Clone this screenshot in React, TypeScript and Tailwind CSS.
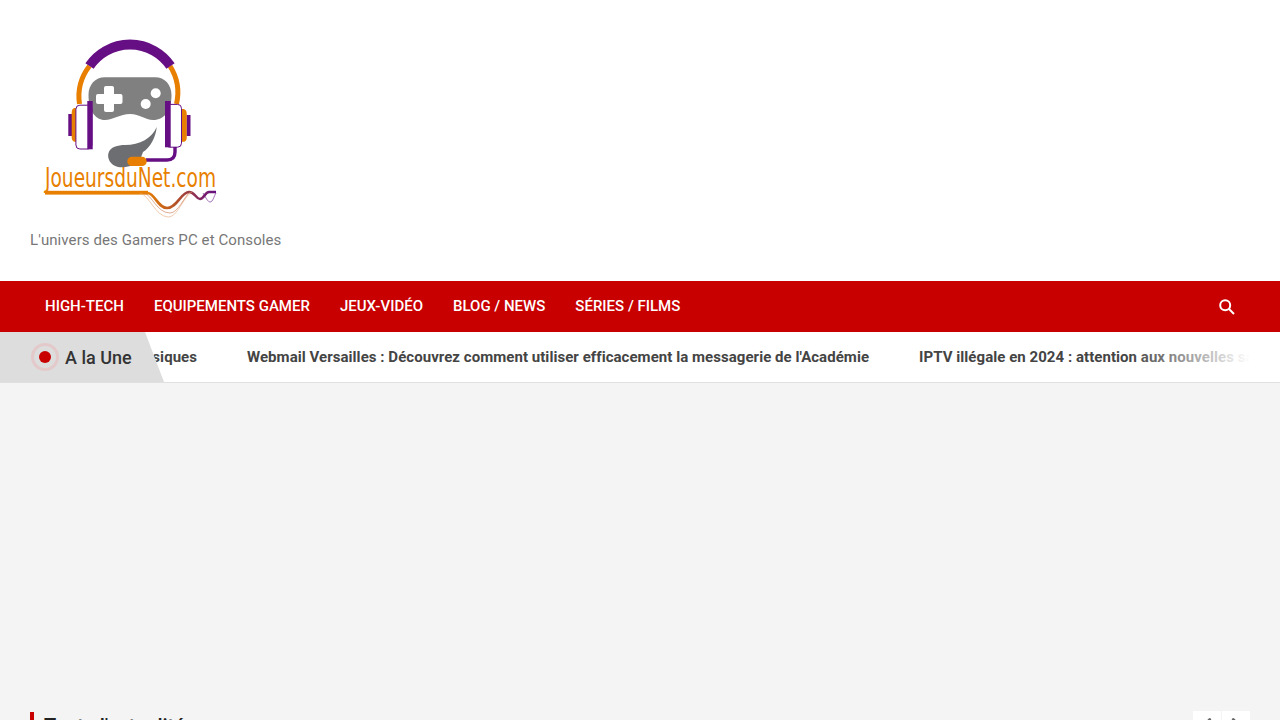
import React from "react";
import { ChevronLeft, ChevronRight } from "lucide-react";

const NAV = ["High-Tech", "Equipements Gamer", "Jeux-Vidéo", "Blog / News", "Séries / Films"];

const TICKER = [
  "Webmail Versailles : Découvrez comment utiliser efficacement la messagerie de l'Académie",
  "IPTV illégale en 2024 : attention aux nouvelles sanctions",
];

const ORANGE = "#e87f00";
const PURPLE = "#660e83";

// viewBox uses page coordinates so the numbers line up with the screenshot
function Logo() {
  return (
    <svg width="200" height="200" viewBox="30 30 200 200" className="block">
      <defs>
        <linearGradient id="wave" x1="146" y1="0" x2="215" y2="0" gradientUnits="userSpaceOnUse">
          <stop offset="0" stopColor={ORANGE} />
          <stop offset="0.45" stopColor="#b2502a" />
          <stop offset="1" stopColor={PURPLE} />
        </linearGradient>
      </defs>
      {/* headband */}
      <path d="M89.5 66A50 50 0 0 0 79.5 104" fill="none" stroke={ORANGE} strokeWidth="5" />
      <path d="M170 66A50 50 0 0 1 176.5 104" fill="none" stroke={ORANGE} strokeWidth="5" />
      <path d="M89.5 66A49 49 0 0 1 170.5 66" fill="none" stroke={PURPLE} strokeWidth="10" />
      {/* pad */}
      <path
        d="M105 77.3H155C165 77.3 171.5 85 171.5 95C171.5 110 165 120 153 120C145 120 140 114 130 114C120 114 113 120 105 120C95 120 88.5 110 88.5 95C88.5 85 95 77.3 105 77.3Z"
        fill="#808080"
      />
      <rect x="104" y="86" width="10" height="26" rx="2" fill="#fff" />
      <rect x="96" y="94" width="26.5" height="10" rx="2" fill="#fff" />
      <circle cx="155.7" cy="93.3" r="5" fill="#fff" />
      <circle cx="145.7" cy="104" r="5" fill="#fff" />
      {/* left ear */}
      <rect x="68.3" y="114" width="4" height="22" fill={PURPLE} />
      <path d="M76 108H74Q71.7 109 71.7 112V138Q71.7 141 74 141.7H76Z" fill={ORANGE} />
      <rect x="75.9" y="105.2" width="16" height="43.8" rx="4" fill="#fff" stroke={PURPLE} strokeWidth="1" />
      <rect x="87.3" y="101" width="5.4" height="48.3" fill={PURPLE} />
      {/* right ear */}
      <rect x="186.5" y="115" width="4" height="21" fill={PURPLE} />
      <path d="M181 109H184Q186.7 110 186.7 113V138Q186.7 141 184 141.7H181Z" fill={ORANGE} />
      <rect x="165.5" y="104.4" width="16" height="42.8" rx="4" fill="#fff" stroke={PURPLE} strokeWidth="1" />
      <rect x="165" y="101" width="5.7" height="46.3" fill={PURPLE} />
      {/* chin + mic */}
      <path
        d="M156.7 127C156 137 150 148 143 152L140 160C135 166 125 168 118 167C110 165 107 158 108.5 153C110 147 118 145 125 145C140 145 152 138 156.7 127Z"
        fill="#6d6e71"
      />
      <path d="M175 147V152Q175 160 167 160H146" fill="none" stroke={PURPLE} strokeWidth="3.4" />
      <rect x="127.3" y="156.7" width="19.4" height="9.4" rx="4.7" fill={ORANGE} />
      {/* wordmark */}
      <text
        x="45"
        y="187"
        fontFamily="'DejaVu Sans', sans-serif"
        fontSize="26"
        fill={ORANGE}
        textLength="171"
        lengthAdjust="spacingAndGlyphs"
      >
        JoueursduNet.com
      </text>
      {/* line + wave */}
      <path d="M148 193C155 194 158 208 167 208C177 208 181 192 189 192C195 192 196 199 200 199C204 199 205 192 209 192H216" fill="none" stroke="url(#wave)" strokeWidth="2.6" />
      <rect x="45" y="190.8" width="103" height="3.8" fill={ORANGE} />
      <path d="M140 193C150 196 155 216 168 217C178 217 183 197 192 192" fill="none" stroke="#e8a878" strokeWidth="0.6" />
      <path d="M144 193C152 195 157 213 170 213C178 213 184 197 190 192" fill="none" stroke="#c9764a" strokeWidth="0.6" />
      <path d="M203 193C206 198 208 202 210 202C213 202 214 196 216 193" fill="none" stroke={PURPLE} strokeWidth="0.6" />
    </svg>
  );
}

export default function App() {
  return (
    <div className="h-[720px] overflow-hidden bg-[#f4f4f4] font-['Roboto',sans-serif]">
      <header className="h-[281px] bg-white px-[30px] pt-[30px]">
        <Logo />
        <p className="text-[15px] leading-[20px] tracking-[0.09px] text-[#777777]">L'univers des Gamers PC et Consoles</p>
      </header>

      <nav className="flex h-[51px] items-center justify-between bg-[#c80000] px-[30px]">
        <ul className="flex">
          {NAV.map((item) => (
            <li key={item} className="px-[15px] text-[15px] font-medium uppercase text-white">
              {item}
            </li>
          ))}
        </ul>
        <svg width="16" height="16" viewBox="0 0 16 16" className="mr-[15px]" fill="none" stroke="#fff" strokeWidth="2">
          <circle cx="6.2" cy="6.2" r="5" />
          <path d="M10 10L15 15" />
        </svg>
      </nav>

      <div className="relative h-[51px] border-b border-[#e0e0e0] bg-white px-[30px]">
        <div className="flex h-full items-center gap-[50px] overflow-hidden whitespace-nowrap text-[15px] font-bold tracking-[0.05px] text-[#444444]">
          <span className="flex w-[167px] shrink-0 justify-end">classiques</span>
          {TICKER.map((title) => (
            <span key={title} className="shrink-0">
              {title}
            </span>
          ))}
        </div>
        <div className="absolute right-[30px] top-0 h-full w-[120px] bg-gradient-to-r from-transparent to-white" />
        <div className="absolute left-0 top-0 flex h-full w-[164px] items-center gap-[6px] bg-[#dddddd] pl-[31px] [clip-path:polygon(0_0,145px_0,164px_100%,0_100%)]">
          <span className="flex h-[28px] w-[28px] items-center justify-center rounded-full border-[3px] border-[#e3c9ca]">
            <span className="h-[12px] w-[12px] rounded-full bg-[#c80000]" />
          </span>
          <span className="text-[18px] font-medium text-[#333333]">A la Une</span>
        </div>
      </div>

      <section className="mt-[328px] flex items-start justify-between px-[30px]">
        <h2 className="mt-px border-l-4 border-[#c80000] pl-[10px] text-[20px] font-medium leading-[28px] text-[#222222]">
          Toute l'actualité
        </h2>
        <div className="flex gap-px">
          <button className="flex h-[28px] w-[28px] items-center justify-center bg-white text-[#666666]">
            <ChevronLeft size={22} strokeWidth={3} />
          </button>
          <button className="flex h-[28px] w-[28px] items-center justify-center bg-white text-[#666666]">
            <ChevronRight size={22} strokeWidth={3} />
          </button>
        </div>
      </section>
    </div>
  );
}
